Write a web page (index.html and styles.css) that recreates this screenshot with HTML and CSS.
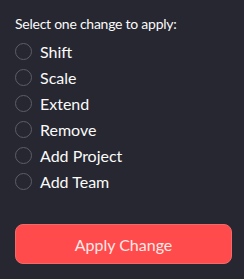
FILE: index.html
```html
<!DOCTYPE html>
<html lang="en">
<head>
    <meta charset="UTF-8">
    <meta name="viewport" content="width=device-width, initial-scale=1.0">
    <title>Apply Change</title>
    <link rel="stylesheet" href="styles.css">
</head>
<body>
    <div class="panel">
        <p class="prompt">Select one change to apply:</p>
        <div class="options">
            <label class="option"><span class="radio"></span>Shift</label>
            <label class="option"><span class="radio"></span>Scale</label>
            <label class="option"><span class="radio"></span>Extend</label>
            <label class="option"><span class="radio"></span>Remove</label>
            <label class="option"><span class="radio"></span>Add Project</label>
            <label class="option"><span class="radio"></span>Add Team</label>
        </div>
        <button class="apply-button">Apply Change</button>
    </div>
</body>
</html>
```

FILE: styles.css
```css
/* General styling */
body {
    margin: 0;
    background-color: #262730; /* Dark background */
    color: #fafafa;
    font-family: Lato, "Noto Sans", sans-serif;
}
.panel {
    padding: 16px 12px 0 15px;
    display: flex;
    flex-direction: column;
}
.prompt {
    margin: 0;
    font-size: 14px;
    line-height: 16px;
    letter-spacing: -0.25px;
}
.options {
    display: flex;
    flex-direction: column;
    margin-top: 6px;
}
.option {
    display: flex;
    align-items: center;
    height: 26px;
    font-size: 16px;
    cursor: pointer;
}
.radio {
    box-sizing: border-box;
    width: 17px;
    height: 17px;
    border: 1.5px solid #5c5e68;
    border-radius: 50%;
    margin-right: 8px;
    flex-shrink: 0;
}
.apply-button {
    margin-top: 30px;
    height: 40px;
    width: 100%;
    border: 1px solid #f06a6a;
    border-radius: 8px;
    background-color: #ff4b4b; /* Primary color */
    color: #fde8e8;
    font-family: Lato, "Noto Sans", sans-serif;
    font-size: 16px;
    cursor: pointer;
}
```
